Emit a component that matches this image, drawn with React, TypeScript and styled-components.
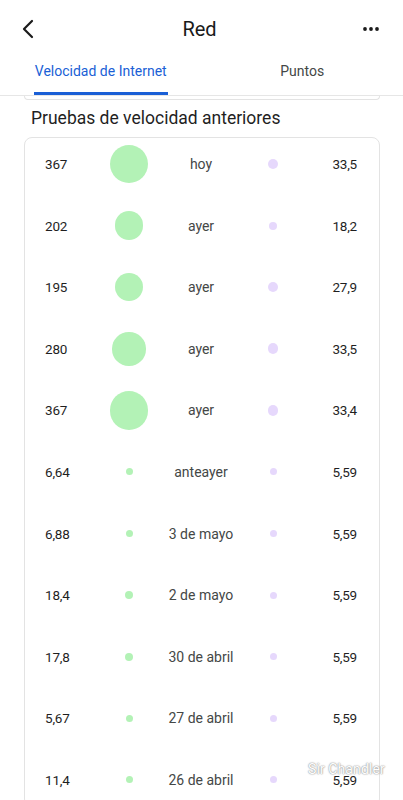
import React from 'react';
import styled, { createGlobalStyle } from 'styled-components';

const GlobalStyle = createGlobalStyle`
  html, body {
    margin: 0;
    padding: 0;
    background: #ffffff;
    font-family: Roboto, "Noto Sans", Arial, sans-serif;
    color: #1f1f1f;
  }
  * { box-sizing: border-box; }
`;

interface SpeedTest {
  download: number;
  label: string;
  upload: number;
}

const tests: SpeedTest[] = [
  { download: 367, label: 'hoy', upload: 33.5 },
  { download: 202, label: 'ayer', upload: 18.2 },
  { download: 195, label: 'ayer', upload: 27.9 },
  { download: 280, label: 'ayer', upload: 33.5 },
  { download: 367, label: 'ayer', upload: 33.4 },
  { download: 6.64, label: 'anteayer', upload: 5.59 },
  { download: 6.88, label: '3 de mayo', upload: 5.59 },
  { download: 18.4, label: '2 de mayo', upload: 5.59 },
  { download: 17.8, label: '30 de abril', upload: 5.59 },
  { download: 5.67, label: '27 de abril', upload: 5.59 },
  { download: 11.4, label: '26 de abril', upload: 5.59 },
];

const fmt = (n: number) => {
  const s = n >= 100 ? n.toFixed(0) : n >= 10 ? n.toFixed(1) : n.toFixed(2);
  return s.replace('.', ',');
};

const Page = styled.div`
  position: relative;
  width: 403px;
  height: 800px;
  overflow: hidden;
`;

const Header = styled.header`
  height: 58px;
  display: flex;
  align-items: center;
  justify-content: space-between;
  padding: 0 20px 0 16px;
`;

const IconButton = styled.button`
  width: 24px;
  height: 24px;
  padding: 0;
  border: none;
  background: none;
  display: flex;
  align-items: center;
  justify-content: center;
`;

const Title = styled.h1`
  margin: 0;
  font-size: 20px;
  font-weight: 400;
  color: #1a1a1a;
`;

const TabBar = styled.nav`
  display: flex;
  height: 38px;
  border-bottom: 1px solid #e6e6e6;
`;

const Tab = styled.div`
  flex: 1;
  display: flex;
  justify-content: center;
`;

const TabLabel = styled.span<{ $active?: boolean }>`
  height: 100%;
  display: flex;
  align-items: center;
  padding: 0 1px 8px;
  font-size: 14px;
  font-weight: 400;
  color: ${({ $active }) => ($active ? '#1a5fd6' : '#444746')};
  border-bottom: 3px solid ${({ $active }) => ($active ? '#1a5fd6' : 'transparent')};
`;

const Content = styled.main`
  padding: 0 23px 0 24px;
`;

const PrevCardEnd = styled.div`
  height: 4px;
  border: 1px solid #e3e3e3;
  border-top: none;
  border-radius: 0 0 8px 8px;
`;

const SectionTitle = styled.h2`
  margin: 3px 0 0 7px;
  height: 30px;
  line-height: 30px;
  font-size: 17.5px;
  font-weight: 400;
  color: #1f1f1f;
`;

const Card = styled.section`
  margin-top: 4px;
  border: 1px solid #e3e3e3;
  border-radius: 8px;
  padding: 0 22px 0 20px;
  display: flex;
  flex-direction: column;
  gap: 9.6px;
`;

const Row = styled.div`
  height: 52px;
  display: grid;
  grid-template-columns: 48px 72px 72px 72px 1fr;
  align-items: center;
  font-size: 13.5px;
`;

const Value = styled.span<{ $right?: boolean }>`
  color: #1f1f1f;
  letter-spacing: -0.2px;
  text-align: ${({ $right }) => ($right ? 'right' : 'left')};
`;

const Cell = styled.div`
  display: flex;
  justify-content: center;
  align-items: center;
`;

const Bubble = styled.span<{ $color: string }>`
  display: block;
  border-radius: 50%;
  background: ${({ $color }) => $color};
`;

const DateLabel = styled.span`
  color: #444746;
  font-size: 14px;
  white-space: nowrap;
`;

const Watermark = styled.div`
  position: absolute;
  left: 308px;
  top: 761px;
  font-size: 14px;
  color: #ffffff;
  text-shadow: 0 0 1px #8a8a8a, 0 0 2px #9a9a9a;
  letter-spacing: 0.1px;
`;

export default function App() {
  return (
    <Page>
      <GlobalStyle />
      <Header>
        <IconButton aria-label="Atrás">
          <svg width="16" height="20" viewBox="0 0 16 20">
            <path d="M12 2 L4 10 L12 18" fill="none" stroke="#1a1a1a" strokeWidth="2.2" strokeLinecap="round" strokeLinejoin="round" />
          </svg>
        </IconButton>
        <Title>Red</Title>
        <IconButton aria-label="Más opciones">
          <svg width="18" height="6" viewBox="0 0 18 6">
            <circle cx="3" cy="3" r="1.9" fill="#1a1a1a" />
            <circle cx="9" cy="3" r="1.9" fill="#1a1a1a" />
            <circle cx="15" cy="3" r="1.9" fill="#1a1a1a" />
          </svg>
        </IconButton>
      </Header>
      <TabBar>
        <Tab>
          <TabLabel $active>Velocidad de Internet</TabLabel>
        </Tab>
        <Tab>
          <TabLabel>Puntos</TabLabel>
        </Tab>
      </TabBar>
      <Content>
        <PrevCardEnd />
        <SectionTitle>Pruebas de velocidad anteriores</SectionTitle>
        <Card>
          {tests.map((t, i) => {
            const g = Math.max(7, 2 * Math.sqrt(t.download));
            const p = Math.max(7, 1.9 * Math.sqrt(t.upload));
            return (
              <Row key={i}>
                <Value>{fmt(t.download)}</Value>
                <Cell>
                  <Bubble $color="#b3f2b6" style={{ width: g, height: g }} />
                </Cell>
                <Cell>
                  <DateLabel>{t.label}</DateLabel>
                </Cell>
                <Cell>
                  <Bubble $color="#e6d8fc" style={{ width: p, height: p }} />
                </Cell>
                <Value $right>{fmt(t.upload)}</Value>
              </Row>
            );
          })}
        </Card>
      </Content>
      <Watermark>Sir Chandler</Watermark>
    </Page>
  );
}
